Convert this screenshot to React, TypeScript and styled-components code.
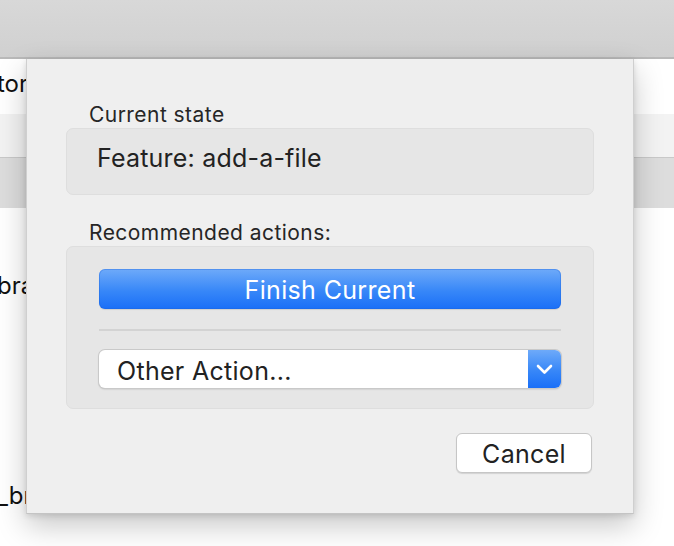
import React from 'react';
import styled, { createGlobalStyle } from 'styled-components';

const GlobalStyle = createGlobalStyle`
  html, body {
    margin: 0;
    padding: 0;
    background: #ffffff;
  }
  body {
    font-family: 'Inter', 'Noto Sans', 'Liberation Sans', sans-serif;
    color: #222222;
  }
`;

const Page = styled.div`
  position: relative;
  width: 674px;
  height: 546px;
  overflow: hidden;
  background: #ffffff;
`;

const TitleBar = styled.div`
  height: 57px;
  background: linear-gradient(180deg, #d8d8d8 0%, #d0d0d0 100%);
  border-bottom: 2px solid #b9b9b9;
`;

const Row = styled.div<{ $tone: 'white' | 'light' | 'dark'; $height: number }>`
  height: ${(p) => p.$height}px;
  background: ${(p) =>
    p.$tone === 'dark' ? '#dddddd' : p.$tone === 'light' ? '#f3f3f3' : '#ffffff'};
  border-top: ${(p) => (p.$tone === 'dark' ? '1px solid #c9c9c9' : 'none')};
`;

const RowText = styled.div<{ $top: number }>`
  padding-top: ${(p) => p.$top}px;
  font-size: 24px;
  line-height: 28px;
  color: #111111;
  white-space: nowrap;
  margin-left: -3px;
`;

const Sheet = styled.div`
  position: absolute;
  left: 26px;
  top: 59px;
  width: 608px;
  height: 455px;
  box-sizing: border-box;
  background: #efefef;
  border-left: 1px solid #cfcfcf;
  border-right: 1px solid #cfcfcf;
  border-bottom: 1px solid #c4c4c4;
  box-shadow: 0 12px 28px rgba(0, 0, 0, 0.22), 0 2px 6px rgba(0, 0, 0, 0.12);
  padding: 44px 39px 0 39px;
  display: flex;
  flex-direction: column;
`;

const Label = styled.div<{ $gap?: number }>`
  font-size: 21px;
  line-height: 24px;
  letter-spacing: 0.45px;
  color: #262626;
  margin-left: 23px;
  margin-top: ${(p) => p.$gap ?? 0}px;
  margin-bottom: 1px;
`;

const Group = styled.div`
  box-sizing: border-box;
  width: 528px;
  background: #e6e6e6;
  border: 1px solid #dedede;
  border-radius: 7px;
`;

const StateBox = styled(Group)`
  height: 67px;
  padding: 14px 30px 0;
  font-size: 25px;
  line-height: 30px;
  letter-spacing: 0.2px;
  color: #222222;
`;

const ActionsBox = styled(Group)`
  height: 163px;
  padding: 22px 32px 0;
  display: flex;
  flex-direction: column;
`;

const PrimaryButton = styled.button`
  height: 40px;
  width: 100%;
  border: none;
  border-radius: 6px;
  background: linear-gradient(180deg, #6eaaf9 0%, #3787f8 55%, #1a6ff7 100%);
  box-shadow: inset 0 0 0 1px rgba(30, 100, 220, 0.35), 0 1px 1px rgba(0, 0, 0, 0.1);
  color: #ffffff;
  font-family: inherit;
  font-size: 25px;
  line-height: 30px;
  letter-spacing: 0.35px;
  padding: 2px 0 0;
`;

const Separator = styled.div`
  height: 2px;
  background: #d3d3d3;
  margin: 20px 0 19px;
`;

const Select = styled.div`
  height: 38px;
  display: flex;
  border-radius: 6px;
  background: #ffffff;
  box-shadow: 0 0 0 1px #c9c9c9, 0 1px 2px rgba(0, 0, 0, 0.25);
  overflow: hidden;
`;

const SelectValue = styled.div`
  flex: 1;
  padding: 2px 0 0 18px;
  font-size: 25px;
  line-height: 38px;
  letter-spacing: 0.3px;
  color: #222222;
`;

const SelectArrow = styled.div`
  width: 33px;
  display: flex;
  align-items: center;
  justify-content: center;
  background: linear-gradient(180deg, #6eaaf9 0%, #3787f8 55%, #1a6ff7 100%);
`;

const Footer = styled.div`
  display: flex;
  justify-content: flex-end;
  padding-right: 2px;
  margin-top: 24px;
`;

const SecondaryButton = styled.button`
  width: 136px;
  height: 40px;
  border-radius: 6px;
  border: 1px solid #c6c6c6;
  background: #ffffff;
  box-shadow: 0 1px 1px rgba(0, 0, 0, 0.12);
  color: #222222;
  font-family: inherit;
  font-size: 25px;
  line-height: 30px;
  letter-spacing: 0.3px;
  padding: 2px 0 0;
`;

const Chevron = () => (
  <svg width="17" height="11" viewBox="0 0 17 11">
    <polyline
      points="2,2 8.5,8.5 15,2"
      fill="none"
      stroke="#ffffff"
      strokeWidth="2.6"
      strokeLinecap="round"
      strokeLinejoin="round"
    />
  </svg>
);

const App = (): JSX.Element => {
  return (
    <Page>
      <GlobalStyle />
      <TitleBar />
      <Row $tone="white" $height={55}>
        <RowText $top={11}>tor</RowText>
      </Row>
      <Row $tone="light" $height={43} />
      <Row $tone="dark" $height={50} />
      <Row $tone="white" $height={338}>
        <RowText $top={64}>bra</RowText>
        <RowText $top={182}>_br</RowText>
      </Row>

      <Sheet>
        <Label>Current state</Label>
        <StateBox>Feature: add-a-file</StateBox>
        <Label $gap={26}>Recommended actions:</Label>
        <ActionsBox>
          <PrimaryButton>Finish Current</PrimaryButton>
          <Separator />
          <Select>
            <SelectValue>Other Action...</SelectValue>
            <SelectArrow>
              <Chevron />
            </SelectArrow>
          </Select>
        </ActionsBox>
        <Footer>
          <SecondaryButton>Cancel</SecondaryButton>
        </Footer>
      </Sheet>
    </Page>
  );
};

export default App;
